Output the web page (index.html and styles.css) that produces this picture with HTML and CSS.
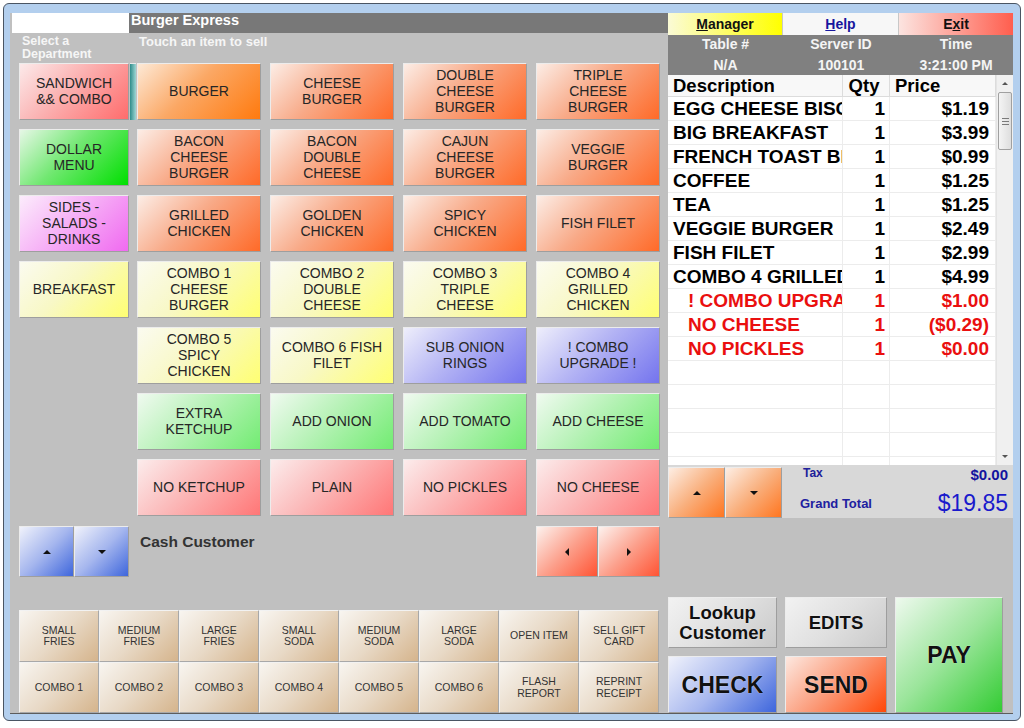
FILE: index.html
```html
<!DOCTYPE html>
<html>
<head>
<meta charset="utf-8">
<title>Burger Express POS</title>
<link rel="stylesheet" href="styles.css">
</head>
<body>
<div class="window">
  <div class="content">
    <div class="left">
      <div class="titlebar">
        <div class="logo-box"></div>
        <div class="store">Burger Express</div>
      </div>
      <div class="labels">
        <div class="dept-lbl">Select a<br>Department</div>
        <div class="item-lbl">Touch an item to sell</div>
      </div>
      <div class="main">
        <div class="depts">
          <div class="btn g-red">SANDWICH<br>&amp;&amp; COMBO</div>
          <div class="btn g-green">DOLLAR<br>MENU</div>
          <div class="btn g-violet">SIDES -<br>SALADS -<br>DRINKS</div>
          <div class="btn g-yellow">BREAKFAST</div>
        </div>
        <div class="selcol"><div class="selbar"></div></div>
        <div class="items">
          <div class="btn g-orange">BURGER</div>
          <div class="btn g-salmon">CHEESE<br>BURGER</div>
          <div class="btn g-salmon">DOUBLE<br>CHEESE<br>BURGER</div>
          <div class="btn g-salmon">TRIPLE<br>CHEESE<br>BURGER</div>

          <div class="btn g-salmon">BACON<br>CHEESE<br>BURGER</div>
          <div class="btn g-salmon">BACON<br>DOUBLE<br>CHEESE</div>
          <div class="btn g-salmon">CAJUN<br>CHEESE<br>BURGER</div>
          <div class="btn g-salmon">VEGGIE<br>BURGER</div>

          <div class="btn g-salmon">GRILLED<br>CHICKEN</div>
          <div class="btn g-salmon">GOLDEN<br>CHICKEN</div>
          <div class="btn g-salmon">SPICY<br>CHICKEN</div>
          <div class="btn g-salmon">FISH FILET</div>

          <div class="btn g-yellow">COMBO 1<br>CHEESE<br>BURGER</div>
          <div class="btn g-yellow">COMBO 2<br>DOUBLE<br>CHEESE</div>
          <div class="btn g-yellow">COMBO 3<br>TRIPLE<br>CHEESE</div>
          <div class="btn g-yellow">COMBO 4<br>GRILLED<br>CHICKEN</div>

          <div class="btn g-yellow">COMBO 5<br>SPICY<br>CHICKEN</div>
          <div class="btn g-yellow">COMBO 6 FISH<br>FILET</div>
          <div class="btn g-blue">SUB ONION<br>RINGS</div>
          <div class="btn g-blue">! COMBO<br>UPGRADE !</div>

          <div class="btn g-lgreen">EXTRA<br>KETCHUP</div>
          <div class="btn g-lgreen">ADD ONION</div>
          <div class="btn g-lgreen">ADD TOMATO</div>
          <div class="btn g-lgreen">ADD CHEESE</div>

          <div class="btn g-pink">NO KETCHUP</div>
          <div class="btn g-pink">PLAIN</div>
          <div class="btn g-pink">NO PICKLES</div>
          <div class="btn g-pink">NO CHEESE</div>
        </div>
      </div>
      <div class="navrow">
        <div class="navgroup">
          <div class="btn nav g-navblue"><span class="tri-up"></span></div>
          <div class="btn nav g-navblue"><span class="tri-down"></span></div>
        </div>
        <div class="customer">Cash Customer</div>
        <div class="navgroup right-group">
          <div class="btn nav2 g-navred"><span class="tri-left"></span></div>
          <div class="btn nav2 g-navred"><span class="tri-right"></span></div>
        </div>
      </div>
      <div class="quick">
        <div class="btn q">SMALL<br>FRIES</div>
        <div class="btn q">MEDIUM<br>FRIES</div>
        <div class="btn q">LARGE<br>FRIES</div>
        <div class="btn q">SMALL<br>SODA</div>
        <div class="btn q">MEDIUM<br>SODA</div>
        <div class="btn q">LARGE<br>SODA</div>
        <div class="btn q">OPEN ITEM</div>
        <div class="btn q">SELL GIFT<br>CARD</div>
        <div class="btn q">COMBO 1</div>
        <div class="btn q">COMBO 2</div>
        <div class="btn q">COMBO 3</div>
        <div class="btn q">COMBO 4</div>
        <div class="btn q">COMBO 5</div>
        <div class="btn q">COMBO 6</div>
        <div class="btn q">FLASH<br>REPORT</div>
        <div class="btn q">REPRINT<br>RECEIPT</div>
      </div>
    </div>

    <div class="right">
      <div class="toprow">
        <div class="tbtn t-manager"><u>M</u>anager</div>
        <div class="tbtn t-help"><u>H</u>elp</div>
        <div class="tbtn t-exit">E<u>x</u>it</div>
      </div>
      <div class="info">
        <div>Table #</div><div>Server ID</div><div>Time</div>
        <div class="v">N/A</div><div class="v">100101</div><div class="v">3:21:00 PM</div>
      </div>
      <div class="ticket">
        <div class="grid">
          <div class="row head">
            <div class="c d">Description</div><div class="c q2">Qty</div><div class="c p">Price</div>
          </div>
          <div class="row"><div class="c d">EGG CHEESE BISCUIT</div><div class="c q2">1</div><div class="c p">$1.19</div></div>
          <div class="row"><div class="c d">BIG BREAKFAST</div><div class="c q2">1</div><div class="c p">$3.99</div></div>
          <div class="row"><div class="c d">FRENCH TOAST BITES</div><div class="c q2">1</div><div class="c p">$0.99</div></div>
          <div class="row"><div class="c d">COFFEE</div><div class="c q2">1</div><div class="c p">$1.25</div></div>
          <div class="row"><div class="c d">TEA</div><div class="c q2">1</div><div class="c p">$1.25</div></div>
          <div class="row"><div class="c d">VEGGIE BURGER</div><div class="c q2">1</div><div class="c p">$2.49</div></div>
          <div class="row"><div class="c d">FISH FILET</div><div class="c q2">1</div><div class="c p">$2.99</div></div>
          <div class="row"><div class="c d">COMBO 4 GRILLED CHICKEN</div><div class="c q2">1</div><div class="c p">$4.99</div></div>
          <div class="row mod"><div class="c d">! COMBO UPGRADE !</div><div class="c q2">1</div><div class="c p">$1.00</div></div>
          <div class="row mod"><div class="c d">NO CHEESE</div><div class="c q2">1</div><div class="c p">($0.29)</div></div>
          <div class="row mod"><div class="c d">NO PICKLES</div><div class="c q2">1</div><div class="c p">$0.00</div></div>
          <div class="row"><div class="c d"></div><div class="c q2"></div><div class="c p"></div></div>
          <div class="row"><div class="c d"></div><div class="c q2"></div><div class="c p"></div></div>
          <div class="row"><div class="c d"></div><div class="c q2"></div><div class="c p"></div></div>
          <div class="row"><div class="c d"></div><div class="c q2"></div><div class="c p"></div></div>
          <div class="row"><div class="c d"></div><div class="c q2"></div><div class="c p"></div></div>
        </div>
        <div class="scrollbar">
          <div class="sb-arrow"><span class="sb-up"></span></div>
          <div class="sb-thumb"><span></span><span></span><span></span></div>
          <div class="sb-track"></div>
          <div class="sb-arrow"><span class="sb-down"></span></div>
        </div>
      </div>
      <div class="totals">
        <div class="tot-btns">
          <div class="btn tb g-orange2"><span class="tri-up"></span></div>
          <div class="btn tb g-orange2"><span class="tri-down"></span></div>
        </div>
        <div class="tot-info">
          <div class="tax-row"><span class="tax-lbl">Tax</span><span class="tax-val">$0.00</span></div>
          <div class="gt-row"><span class="gt-lbl">Grand Total</span><span class="gt-val">$19.85</span></div>
        </div>
      </div>
      <div class="actions">
        <div class="btn act g-gray lookup">Lookup<br>Customer</div>
        <div class="btn act g-gray edits">EDITS</div>
        <div class="btn act g-pay pay">PAY</div>
        <div class="btn act g-check big">CHECK</div>
        <div class="btn act g-send big">SEND</div>
      </div>
    </div>
  </div>
</div>
</body>
</html>
```

FILE: styles.css
```css
* { box-sizing: border-box; margin: 0; padding: 0; }

body {
  margin: 0;
  width: 1024px;
  height: 728px;
  overflow: hidden;
  background: #ffffff;
  font-family: "Liberation Sans", Arial, sans-serif;
}

.window {
  margin: 3px 0 0 3px;
  width: 1018px;
  height: 718px;
  border: 1px solid #4a5563;
  border-radius: 6px;
  background: #b3cfee;
  padding: 9px 7px 6px 6px;
}

.content {
  display: flex;
  height: 701px;
  background: #c0c0c0;
  border-bottom: 1px solid #5c5c5c;
}

/* ---------- left ---------- */
.left {
  width: 658px;
  display: flex;
  flex-direction: column;
}

.titlebar {
  display: flex;
  height: 20px;
}

.logo-box {
  width: 117px;
  margin-left: 2px;
  background: #ffffff;
}

.store {
  flex: 1;
  background: #787878;
  color: #ffffff;
  font-weight: bold;
  font-size: 14.5px;
  line-height: 15px;
  padding-left: 2px;
}

.labels {
  display: flex;
  height: 30px;
  color: #f6f6f6;
  font-weight: bold;
}

.dept-lbl {
  width: 129px;
  padding-left: 12px;
  padding-top: 2px;
  font-size: 12.5px;
  line-height: 12.5px;
}

.item-lbl {
  padding-top: 2px;
  font-size: 13px;
  line-height: 13px;
}

.main {
  display: grid;
  grid-template-columns: 110px 8px 523px;
  margin-left: 9px;
  height: 453px;
}

.depts {
  display: grid;
  grid-template-rows: repeat(4, 57px);
  row-gap: 9px;
  align-content: start;
}

.selcol {
  padding-left: 1px;
}

.selbar {
  width: 6px;
  height: 57px;
  background: linear-gradient(to right, #2f8c8a, #9fd6d4);
  border-top: 1px solid #e8e8e8;
}

.items {
  display: grid;
  grid-template-columns: repeat(4, 124px);
  grid-template-rows: repeat(7, 57px);
  column-gap: 9px;
  row-gap: 9px;
}

.btn {
  display: flex;
  align-items: center;
  justify-content: center;
  text-align: center;
  border: 1px solid;
  border-color: #ececec #9e9e9e #9e9e9e #ececec;
  font-size: 14px;
  line-height: 16px;
  color: #262626;
  padding-bottom: 2px;
}

.g-orange { background: linear-gradient(135deg, #fde9d6 0%, #fba865 45%, #ff7a0e 100%); }
.g-salmon { background: linear-gradient(135deg, #fcede6 0%, #f8aa88 45%, #ff6a28 100%); }
.g-red    { background: linear-gradient(135deg, #fceaea 0%, #fbb0b0 45%, #ff6c6c 100%); }
.g-green  { background: linear-gradient(135deg, #e6f7e6 0%, #72e872 45%, #00df00 100%); }
.g-violet { background: linear-gradient(135deg, #fcecfc 0%, #f6b2f6 45%, #f06af0 100%); }
.g-yellow { background: linear-gradient(135deg, #fbfbf0 0%, #f8f8c6 45%, #ffff72 100%); }
.g-blue   { background: linear-gradient(135deg, #eeeefb 0%, #b4b4f4 45%, #7474ee 100%); }
.g-lgreen { background: linear-gradient(135deg, #f0faf0 0%, #b8f2b8 45%, #72ec72 100%); }
.g-pink   { background: linear-gradient(135deg, #fcecec 0%, #fbb8b8 45%, #ff7676 100%); }
.g-navblue{ background: linear-gradient(135deg, #f0f2fb 0%, #a5b6ee 50%, #3e66dc 100%); }
.g-navred { background: linear-gradient(135deg, #fdf2ee 0%, #fca08c 50%, #ff5434 100%); }
.g-orange2{ background: linear-gradient(135deg, #fdeee4 0%, #f9b07e 50%, #ff7620 100%); }

.navrow {
  display: flex;
  height: 51px;
  margin-top: 10px;
}

.navgroup {
  display: flex;
  margin-left: 9px;
}

.nav { width: 55px; height: 51px; padding-bottom: 0; }
.nav2 { width: 62px; height: 51px; padding-bottom: 0; }
.tb { padding-bottom: 0; }

.right-group {
  margin-left: auto;
  margin-right: 8px;
}

.customer {
  margin-left: 11px;
  padding-top: 7px;
  font-size: 15.5px;
  font-weight: bold;
  color: #333333;
}

.tri-up, .tri-down, .tri-left, .tri-right {
  display: block;
  width: 0;
  height: 0;
}
.tri-up { border-left: 4px solid transparent; border-right: 4px solid transparent; border-bottom: 4px solid #111; }
.tri-down { border-left: 4px solid transparent; border-right: 4px solid transparent; border-top: 4px solid #111; }
.tri-left { border-top: 4px solid transparent; border-bottom: 4px solid transparent; border-right: 4px solid #111; }
.tri-right { border-top: 4px solid transparent; border-bottom: 4px solid transparent; border-left: 4px solid #111; }

.quick {
  display: grid;
  grid-template-columns: repeat(8, 80px);
  grid-template-rows: 52px 51px;
  margin-top: 33px;
  margin-left: 9px;
}

.q {
  font-size: 10.5px;
  line-height: 11.5px;
  color: #333333;
  background: linear-gradient(135deg, #f8f5f0 0%, #e8d9c6 50%, #d5b48c 100%);
  border-color: #f2f2f2 #a8a8a8 #a8a8a8 #f2f2f2;
  padding-bottom: 0;
}

/* ---------- right ---------- */
.right {
  width: 345px;
  display: flex;
  flex-direction: column;
}

.toprow {
  display: grid;
  grid-template-columns: 115px 116px 114px;
  height: 22px;
}

.tbtn {
  display: flex;
  align-items: center;
  justify-content: center;
  font-size: 14px;
  font-weight: bold;
  color: #111111;
  border-right: 1px solid #c8c8c8;
}
.t-manager { background: linear-gradient(to right, #fbfbd6, #ffff00); }
.t-help { background: #f7f7f7; color: #16169e; }
.t-exit { background: linear-gradient(to right, #fce4e0, #ff5e4e); border-right: none; }

.info {
  display: grid;
  grid-template-columns: 115px 116px 114px;
  grid-template-rows: 20px 20px;
  height: 40px;
  background: #808080;
  color: #f4f4f4;
  font-size: 14px;
  font-weight: bold;
  text-align: center;
  line-height: 18px;
}
.info .v { line-height: 21px; }

.ticket {
  display: flex;
  height: 390px;
  background: #ffffff;
  overflow: hidden;
}

.grid {
  width: 328px;
  overflow: hidden;
}

.row {
  display: grid;
  grid-template-columns: 175px 47px 106px;
  height: 24px;
  border-bottom: 1px solid #ececec;
  font-size: 19px;
  font-weight: bold;
  color: #000000;
  line-height: 23px;
}

.row.head {
  height: 22px;
  line-height: 21px;
  font-size: 18.5px;
  background: #f8f8f8;
  border-bottom: 1px solid #dcdcdc;
}

.c {
  border-right: 1px solid #ececec;
  overflow: hidden;
  white-space: nowrap;
}
.head .c { border-right-color: #dcdcdc; }

.c.d { padding-left: 5px; text-overflow: clip; }
.c.q2 { text-align: right; padding-right: 4px; }
.c.p { text-align: right; padding-right: 6px; }
.head .c.q2 { text-align: center; padding-right: 4px; }
.head .c.p { text-align: left; padding-left: 5px; }

.row.mod { color: #ea0f0f; }
.row.mod .c.d { padding-left: 20px; }

.scrollbar {
  width: 17px;
  display: flex;
  flex-direction: column;
  background: #f0f0f0;
  border-left: 1px solid #e4e4e4;
}

.sb-arrow {
  height: 17px;
  display: flex;
  align-items: center;
  justify-content: center;
}
.sb-up { display: block; width: 0; height: 0; border-left: 3px solid transparent; border-right: 3px solid transparent; border-bottom: 3px solid #555; }
.sb-down { display: block; width: 0; height: 0; border-left: 3px solid transparent; border-right: 3px solid transparent; border-top: 3px solid #555; }

.sb-thumb {
  height: 58px;
  margin: 0 1px;
  border: 1px solid #a0a0a0;
  border-radius: 2px;
  background: linear-gradient(to right, #f4f4f4, #dedede);
  display: flex;
  flex-direction: column;
  align-items: center;
  justify-content: center;
  gap: 2px;
}
.sb-thumb span {
  display: block;
  width: 7px;
  height: 1px;
  background: #7a7a7a;
}

.sb-track { flex: 1; }

.totals {
  display: flex;
  height: 53px;
  background: #d8d8d8;
}

.tot-btns {
  display: flex;
  padding-top: 2px;
}
.tb { width: 57px; height: 51px; }

.tot-info {
  flex: 1;
  display: flex;
  flex-direction: column;
  padding: 0 5px 0 18px;
}

.tax-row {
  display: flex;
  justify-content: space-between;
  height: 23px;
  padding-top: 1px;
  align-items: flex-start;
}
.tax-lbl { font-size: 12px; font-weight: bold; color: #20209a; padding-left: 3px; line-height: 14px; }
.tax-val { font-size: 15px; font-weight: bold; color: #12129e; line-height: 17px; }

.gt-row {
  display: flex;
  justify-content: space-between;
  align-items: center;
  height: 30px;
}
.gt-lbl { font-size: 13px; font-weight: bold; color: #2020a0; }
.gt-val { font-size: 23px; color: #1a1acc; }

.actions {
  display: grid;
  grid-template-columns: 109px 102px 108px;
  grid-template-rows: 51px 57px;
  column-gap: 8px;
  row-gap: 8px;
  margin-top: 79px;
}

.act {
  font-weight: bold;
  color: #111111;
  text-shadow: 0 0 1px #ffffff;
  padding-bottom: 0;
}
.lookup { font-size: 18.5px; line-height: 20px; }
.edits { font-size: 18.5px; }
.big { font-size: 23px; }
.pay { grid-row: 1 / 3; grid-column: 3; font-size: 23px; }

.g-gray  { background: linear-gradient(135deg, #f2f2f2 0%, #e0e0e0 50%, #c9c9c9 100%); }
.g-check { background: linear-gradient(135deg, #f0f2fb 0%, #a8b8ef 50%, #3e66dc 100%); }
.g-send  { background: linear-gradient(135deg, #fde8e0 0%, #fb9a78 50%, #ff4808 100%); }
.g-pay   { background: linear-gradient(135deg, #eef9ee 0%, #9be59b 50%, #33cc33 100%); }
```
